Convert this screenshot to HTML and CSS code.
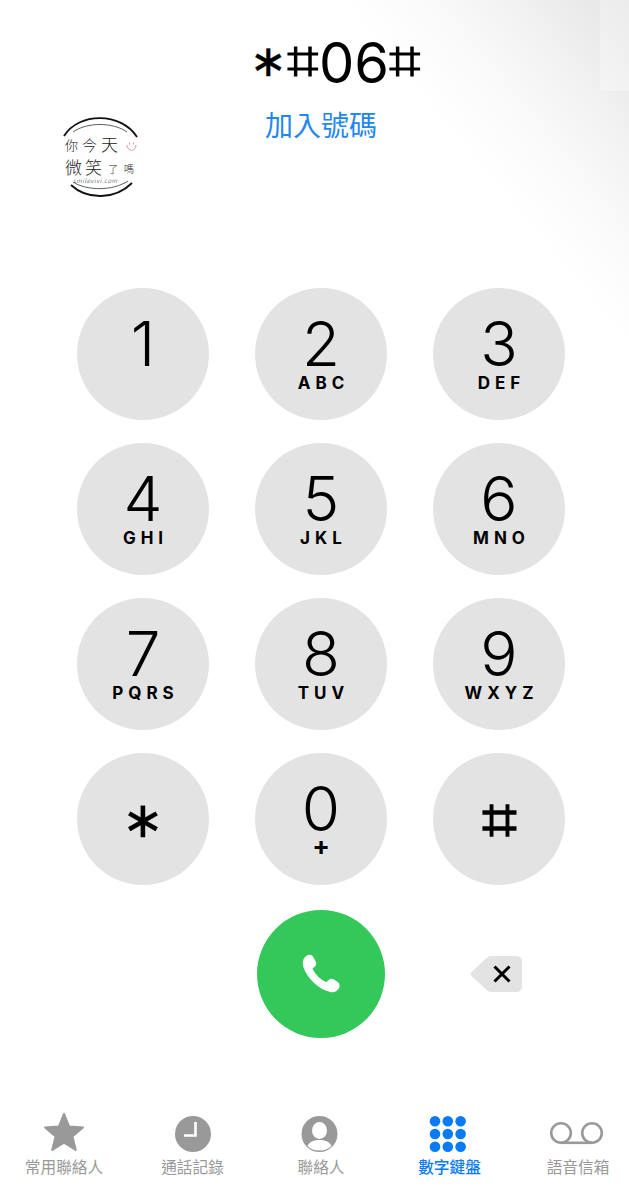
FILE: index.html
```html
<!DOCTYPE html>
<html lang="zh-Hant">
<head>
    <meta charset="UTF-8">
    <meta name="viewport" content="width=device-width, initial-scale=1.0">
    <title>撥號</title>
    <link rel="stylesheet" href="styles.css">
</head>
<body>
    <div class="screen">
        <div class="glare"></div>
        <div class="glare-patch"></div>

        <!-- watermark over the page -->
        <div class="logo">
            <svg class="logo-arcs" width="78" height="84" viewBox="0 0 78 84">
                <path d="M3 20 C 18 -4, 60 -4, 76 21" fill="none" stroke="#111" stroke-width="1.8"/>
                <path d="M12 16 C 26 6, 52 6, 66 16" fill="none" stroke="#333" stroke-width="0.8"/>
                <path d="M12 66 C 26 75, 52 75, 67 65" fill="none" stroke="#333" stroke-width="0.8"/>
                <path d="M10 69 C 26 84, 54 84, 71 67" fill="none" stroke="#111" stroke-width="1.8"/>
            </svg>
            <div class="logo-line logo-top">
                <span class="logo-sm">你</span><span class="logo-md">今</span><span class="logo-lg">天</span>
                <svg class="logo-smile" width="11" height="9" viewBox="0 0 11 9" fill="none" stroke="#e88cbc" stroke-width="1">
                    <path d="M1 3 C 1 10, 10 10, 10 3 M3.500 0.500 V2.500 M7.500 0.500 V2.500"/>
                </svg>
            </div>
            <div class="logo-line logo-mid">
                <span class="logo-lg">微</span><span class="logo-lg">笑</span><span class="logo-xs">了</span><span class="logo-xs">嗎</span>
            </div>
            <div class="logo-url">smilevivi.com</div>
        </div>

        <header class="dial-head">
            <div class="dial-number"><span class="sym star">∗</span><span class="sym hash">⌗</span>06<span class="sym hash">⌗</span></div>
            <div class="add-number">加入號碼</div>
        </header>

        <main class="keypad">
            <div class="key"><span class="digit">1</span></div>
            <div class="key"><span class="digit">2</span><span class="letters">ABC</span></div>
            <div class="key"><span class="digit">3</span><span class="letters">DEF</span></div>
            <div class="key"><span class="digit">4</span><span class="letters">GHI</span></div>
            <div class="key"><span class="digit">5</span><span class="letters">JKL</span></div>
            <div class="key"><span class="digit">6</span><span class="letters">MNO</span></div>
            <div class="key"><span class="digit">7</span><span class="letters">PQRS</span></div>
            <div class="key"><span class="digit">8</span><span class="letters">TUV</span></div>
            <div class="key"><span class="digit">9</span><span class="letters">WXYZ</span></div>
            <div class="key"><span class="digit symbol key-star">∗</span></div>
            <div class="key"><span class="digit">0</span><span class="letters plus">+</span></div>
            <div class="key"><span class="digit symbol key-hash">⌗</span></div>
        </main>

        <div class="call-row">
            <div class="call-btn">
                <svg width="44" height="44" viewBox="0 0 40 40">
                    <path fill="#fff" stroke="#fff" stroke-width="2" stroke-linejoin="round" d="M7.200 4.400 C 9 3 11 3.300 12 4.800 L 14.200 8.800 C 15 10.200 14.600 11.600 13.600 12.600 L 11.700 14.200 C 11.200 14.700 11.200 15.300 11.500 15.900 C 13.600 20.300 18.600 25.600 24.200 28.200 C 24.800 28.500 25.400 28.400 25.800 27.900 L 27.600 26.200 C 28.600 25.200 30 25 31.200 25.800 L 34.600 28.200 C 36.200 29.200 36.400 31.200 35.200 32.800 C 33.400 35.400 31.600 36 28.800 35.400 C 18.400 33.400 7.600 22.400 4.800 13 C 3.800 9.400 4.400 6.400 7.200 4.400 Z"/>
                </svg>
            </div>
            <div class="backspace">
                <svg width="52" height="38" viewBox="0 0 52 38">
                    <path fill="#e3e3e3" d="M21 1 H46 Q52 1 52 7 V31 Q52 37 46 37 H21 Q18.500 37 16.500 35 L1.500 21 Q0 19 1.500 17 L16.500 3 Q18.500 1 21 1 Z"/>
                    <path fill="none" stroke="#000" stroke-width="3" d="M24.500 11.500 L39.500 26.500 M39.500 11.500 L24.500 26.500"/>
                </svg>
            </div>
        </div>

        <nav class="tabs">
            <div class="tab">
                <svg width="42" height="40" viewBox="0 2 42 40"><path fill="#999" stroke="#999" stroke-width="2" stroke-linejoin="round" d="M21 2 L26.200 14.600 L40 15.600 L29.400 24.400 L32.800 38 L21 30.600 L9.200 38 L12.600 24.400 L2 15.600 L15.800 14.600 Z"/></svg>
                <span>常用聯絡人</span>
            </div>
            <div class="tab">
                <svg width="42" height="40" viewBox="0 0 42 40">
                    <circle cx="21" cy="20" r="18" fill="#999"/>
                    <path fill="none" stroke="#fff" stroke-width="2.600" d="M23.500 8 V21.500 H12"/>
                </svg>
                <span>通話記錄</span>
            </div>
            <div class="tab">
                <svg width="42" height="40" viewBox="0 0 42 40">
                    <circle cx="19.500" cy="20" r="18" fill="#999"/>
                    <ellipse cx="19.500" cy="16.500" rx="7.500" ry="8.500" fill="#fff"/>
                    <path fill="#fff" d="M7.500 32 C 9.500 27.500 14.500 26 19.500 26 C 24.500 26 29.500 27.500 31.500 32 C 28.500 35 24.500 36.500 19.500 36.500 C 14.500 36.500 10.500 35 7.500 32 Z"/>
                </svg>
                <span>聯絡人</span>
            </div>
            <div class="tab active">
                <svg width="42" height="40" viewBox="0 0 42 40" fill="#0a7bf5">
                    <circle cx="6" cy="7.300" r="5.300"/><circle cx="18.800" cy="7.300" r="5.300"/><circle cx="31.600" cy="7.300" r="5.300"/>
                    <circle cx="6" cy="20" r="5.300"/><circle cx="18.800" cy="20" r="5.300"/><circle cx="31.600" cy="20" r="5.300"/>
                    <circle cx="6" cy="32.700" r="5.300"/><circle cx="18.800" cy="32.700" r="5.300"/><circle cx="31.600" cy="32.700" r="5.300"/>
                </svg>
                <span>數字鍵盤</span>
            </div>
            <div class="tab">
                <svg width="56" height="40" viewBox="0 0 56 40" fill="none" stroke="#999" stroke-width="2.600">
                    <circle cx="11" cy="19" r="9.800"/><circle cx="42" cy="19" r="9.800"/>
                    <path d="M11 28.800 H42"/>
                </svg>
                <span>語音信箱</span>
            </div>
        </nav>
    </div>
</body>
</html>
```

FILE: styles.css
```css
* {
    margin: 0;
    padding: 0;
    box-sizing: border-box;
}

body {
    background-color: #fff;
    font-family: Inter, "Noto Sans CJK TC", sans-serif;
    color: #000;
    overflow: hidden;
}

.screen {
    position: relative;
    width: 629px;
    height: 1199px;
    overflow: hidden;
    display: flex;
    flex-direction: column;
    align-items: center;
}

/* soft grey reflection in the top right corner */
.glare {
    position: absolute;
    top: 0;
    right: 0;
    width: 290px;
    height: 350px;
    background: linear-gradient(to bottom left, #e4e4e4 0%, #f0f0f0 18%, #f9f9f9 33%, #ffffff 50%);
}

.glare-patch {
    position: absolute;
    top: 0;
    right: 0;
    width: 29px;
    height: 91px;
    background-color: rgba(255, 255, 255, 0.3);
}

.dial-head {
    position: relative;
    width: 100%;
    height: 288px;
    padding-top: 32px;
}

.dial-number {
    font-size: 56px;
    line-height: 62px;
    padding-left: 42px;
    text-align: center;
    white-space: nowrap;
}

.sym {
    font-family: "DejaVu Sans", sans-serif;
}

.star {
    font-size: 44px;
    line-height: 40px;
    vertical-align: 7px;
    -webkit-text-stroke: 0.4px #000;
}

.hash {
    line-height: 40px;
    vertical-align: 3px;
    -webkit-text-stroke: 1.2px #000;
}

.add-number {
    margin-top: 13px;
    font-family: "Noto Sans CJK TC", sans-serif;
    font-size: 28px;
    line-height: 34px;
    color: #1f87ee;
    text-align: center;
    padding-left: 13px;
}

.logo {
    position: absolute;
    z-index: 1;
    left: 61px;
    top: 116px;
    width: 78px;
    height: 84px;
    font-family: "Noto Sans CJK TC", sans-serif;
    font-weight: 300;
    color: #222;
}

.logo-arcs {
    position: absolute;
    top: 0;
    left: 0;
}

.logo-line {
    position: absolute;
    left: 4px;
    display: flex;
    align-items: flex-end;
    white-space: nowrap;
}

.logo-top {
    top: 18px;
    height: 19px;
    gap: 4px;
}

.logo-mid {
    top: 40px;
    height: 20px;
    gap: 3px;
}

.logo-sm {
    font-size: 13px;
    line-height: 16px;
}

.logo-md {
    font-size: 15px;
    line-height: 17px;
}

.logo-lg {
    font-size: 17px;
    line-height: 19px;
}

.logo-xs {
    font-size: 10px;
    line-height: 14px;
    margin-left: 3px;
}

.logo-smile {
    margin-left: 4px;
    margin-bottom: 2px;
}

.logo-url {
    position: absolute;
    top: 61px;
    left: 12px;
    font-size: 6px;
    line-height: 7px;
    letter-spacing: 0.6px;
    font-style: italic;
}

.keypad {
    position: relative;
    display: grid;
    grid-template-columns: repeat(3, 132px);
    column-gap: 46px;
    row-gap: 23px;
    margin-left: 13px;
}

.key {
    position: relative;
    width: 132px;
    height: 132px;
    border-radius: 50%;
    background-color: #e3e3e3;
    display: flex;
    flex-direction: column;
    align-items: center;
    padding-top: 33px;
}

.digit {
    font-size: 62px;
    line-height: 46px;
    font-weight: 350;
}

.letters {
    font-size: 17px;
    line-height: 16px;
    font-weight: 700;
    letter-spacing: 5px;
    margin-right: -5px;
    margin-top: 8px;
}

.plus {
    font-size: 26px;
    line-height: 18px;
    margin-top: 5px;
}

.symbol {
    font-family: "DejaVu Sans", sans-serif;
    font-weight: 400;
}

.key-star {
    font-size: 50px;
    padding-top: 11px;
    -webkit-text-stroke: 0.4px #000;
}

.key-hash {
    padding-top: 11px;
    -webkit-text-stroke: 1.4px #000;
}

.call-row {
    position: relative;
    display: grid;
    grid-template-columns: repeat(3, 132px);
    column-gap: 46px;
    margin-left: 13px;
    margin-top: 25px;
    height: 128px;
}

.call-btn {
    grid-column: 2;
    justify-self: center;
    width: 128px;
    height: 128px;
    border-radius: 50%;
    background-color: #34c85a;
    display: flex;
    align-items: center;
    justify-content: center;
}

.backspace {
    display: flex;
    align-items: center;
    margin-left: 37px;
}

.tabs {
    position: relative;
    width: 100%;
    display: flex;
    gap: 28.5px;
    padding-left: 14px;
    margin-top: 76px;
}

.tab {
    width: 100px;
    display: flex;
    flex-direction: column;
    align-items: center;
    font-family: "Noto Sans CJK TC", sans-serif;
    font-size: 15.7px;
    line-height: 20px;
    color: #999;
    white-space: nowrap;
}

.tab svg {
    margin-bottom: 3px;
    overflow: visible;
}

.tab.active {
    color: #0a7bf5;
    font-weight: 500;
}
```
